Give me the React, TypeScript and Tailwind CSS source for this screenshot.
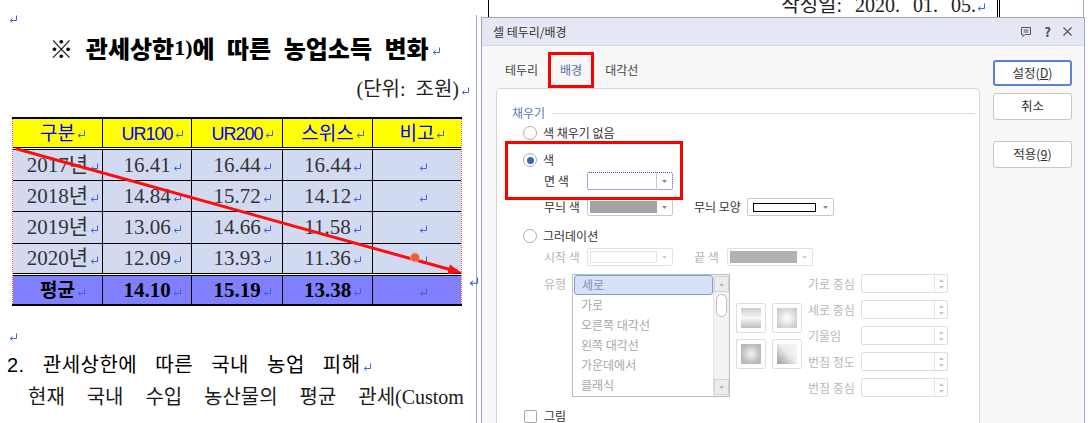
import type { ReactNode } from "react";

const KR = "font-['Noto_Sans_CJK_KR',sans-serif]";
const SERIF = "font-['Liberation_Serif','Noto_Sans_CJK_KR',serif]";
const SANS = "font-['Liberation_Sans','Noto_Sans_CJK_KR',sans-serif]";

function Mark({ className = "" }: { className?: string }) {
  return (
    <svg
      viewBox="0 0 8 8"
      className={`inline-block w-[8px] h-[8px] ${className}`}
      fill="none"
      stroke="#3f63d8"
      strokeWidth="1"
    >
      <path d="M7.5 0.5V5.5H1.5" />
      <path d="M3.5 3.5L1.2 5.5L3.5 7.5" />
    </svg>
  );
}

const COLS = [
  "w-[90px] border-r border-black",
  "w-[89px] border-r border-black",
  "w-[91px] border-r border-black",
  "w-[90px] border-r border-black",
  "w-[88px]",
];

function Row({ cells, className, cellClass = "" }: { cells: ReactNode[]; className: string; cellClass?: string }) {
  return (
    <div className={`flex ${className}`}>
      {cells.map((c, i) => (
        <div key={i} className={`${COLS[i]} h-full flex items-center justify-center ${cellClass}`}>
          <span className="whitespace-nowrap leading-none">
            {c}
            <Mark className="ml-[2px] -mr-[10px]" />
          </span>
        </div>
      ))}
    </div>
  );
}

const DATA = [
  { cells: ["2017년", "16.41", "16.44", "16.44", ""], h: "h-[31px] border-b border-black" },
  { cells: ["2018년", "14.84", "15.72", "14.12", ""], h: "h-[31px] border-b border-black" },
  { cells: ["2019년", "13.06", "14.66", "11.58", ""], h: "h-[32px] border-b border-black" },
  { cells: ["2020년", "12.09", "13.93", "11.36", ""], h: "h-[30px] border-b border-black" },
];

function Table() {
  return (
    <div className="w-[450px]">
      <div className="h-[2px] bg-black" />
      <div className="border-x border-dotted border-[#ff4a4a]">
        <Row
          className={`h-[29px] border-b border-black bg-[#ffff00] text-[#0000ff] ${SANS} text-[19px]`}
          cells={[
            "구분",
            <span key="a" className="text-[18px] tracking-[-1px]">UR100</span>,
            <span key="b" className="text-[18px] tracking-[-1px]">UR200</span>,
            "스위스",
            "비고",
          ]}
        />
        <div className="h-px bg-white" />
        <div className="h-px bg-black" />
        {DATA.map((r) => (
          <Row key={r.cells[0]} className={`${r.h} bg-[#d2daf2] ${SERIF} text-[21px] text-[#333]`} cells={r.cells} />
        ))}
        <div className="h-px bg-white" />
        <div className="h-px bg-black" />
        <Row
          className={`h-[28px] bg-[#8080ff] ${SERIF} text-[21px] font-bold text-black`}
          cells={[<span key="p" className="text-[19px]">평균</span>, "14.10", "15.19", "13.38", ""]}
        />
      </div>
      <div className="h-[2px] bg-black" />
    </div>
  );
}

function Doc() {
  const words = ["현재", "국내", "수입", "농산물의", "평균", "관세(Custom"];
  return (
    <div className="relative w-[476px] shrink-0 flex flex-col text-black">
      <div className="h-[27px] flex items-end pb-[4px] pl-[9px]">
        <Mark className="block" />
      </div>
      <div className="h-[42px] flex items-center justify-center pl-[2px]">
        <span className={`${KR} font-black text-[24px] leading-none whitespace-nowrap [word-spacing:7px]`}>
          ※ 관세상한
          <span className="font-['Liberation_Serif',serif] font-bold text-[22px] align-[3px]">1)</span>에 따른
          농업소득 변화
          <Mark className="ml-[3px] -mr-[11px]" />
        </span>
      </div>
      <div className="h-[40px] flex items-center justify-end pr-[7px]">
        <span className={`${SERIF} text-[20px] leading-none whitespace-nowrap text-[#222] [word-spacing:5px]`}>
          (단위: 조원)
          <Mark className="ml-[2px]" />
        </span>
      </div>
      <div className="mt-[8px] ml-[12px] flex">
        <Table />
        <div className="pt-[151px] ml-[7px]">
          <Mark className="block w-[9px] h-[9px]" />
        </div>
      </div>
      <div className="h-[20px]" />
      <div className="h-[22px] flex items-center pl-[9px]">
        <Mark className="block" />
      </div>
      <div className="h-[34px] flex items-center pl-[7px]">
        <span className={`${SANS} text-[20px] leading-none whitespace-nowrap tracking-[0.5px] [word-spacing:12px]`}>
          2. 관세상한에 따른 국내 농업 피해
          <Mark className="ml-[2px]" />
        </span>
      </div>
      <div className={`h-[30px] ml-[28px] w-[436px] flex items-center justify-between ${SERIF} text-[20px] leading-none text-[#1a1a1a]`}>
        {words.map((w) => (
          <span key={w} className="whitespace-nowrap">{w}</span>
        ))}
      </div>

      <svg className="absolute left-0 top-0 w-[476px] h-[423px] pointer-events-none" viewBox="0 0 476 423">
        <line x1="17" y1="149" x2="449" y2="269.3" stroke="#ff0d0d" strokeWidth="3" strokeLinecap="round" />
        <polygon points="462,273 447.2,274.3 449.9,264.4" fill="#ff0d0d" />
        <circle cx="415" cy="257.5" r="4.5" fill="#ef5b3c" stroke="#f7a58f" strokeWidth="1" />
      </svg>
    </div>
  );
}

function TopStrip() {
  return (
    <div className="h-[17px] shrink-0 flex overflow-hidden">
      <div className="ml-[11px] w-px bg-black" />
      <div className="w-[508px] flex justify-end items-start pr-[12px]">
        <span className={`-mt-[5px] ${SERIF} text-[20px] leading-[20px] whitespace-nowrap text-[#222] [word-spacing:8px]`}>
          작성일: 2020. 01. 05.
          <Mark className="ml-[1px]" />
        </span>
      </div>
      <div className="w-px bg-black" />
      <div className="ml-[1px] w-px bg-black" />
      <div className="ml-[83px] w-px bg-[#a3abcf]" />
    </div>
  );
}

function Radio({ on }: { on?: boolean }) {
  return (
    <span className="w-[14px] h-[14px] rounded-full border border-[#adadad] bg-white flex items-center justify-center shrink-0">
      {on && <span className="w-[7px] h-[7px] rounded-full bg-[#3f5fb8]" />}
    </span>
  );
}

function Arrow({ up, color }: { up?: boolean; color: string }) {
  return (
    <svg width="5" height="3" viewBox="0 0 5 3">
      <path d={up ? "M0 3h5L2.5 0z" : "M0 0h5L2.5 3z"} fill={color} />
    </svg>
  );
}

function Combo({
  width,
  children,
  focused,
  dim,
}: {
  width: string;
  children?: ReactNode;
  focused?: boolean;
  dim?: boolean;
}) {
  const border = focused
    ? "border border-dotted border-[#2f55c0]"
    : dim
      ? "border border-[#e2e2e2]"
      : "border border-[#c9c9c9]";
  return (
    <div className={`${width} h-[18px] ${border} bg-white flex items-center pl-[2px] rounded-[2px] shrink-0`}>
      <div className="flex-1 h-full py-[2px] flex items-center">{children}</div>
      <div className="w-[15px] h-full flex items-center justify-center">
        <Arrow color={dim ? "#d0d0d0" : "#8a8a8a"} />
      </div>
    </div>
  );
}

function Spin() {
  return (
    <div className="w-[87px] h-[19px] border border-[#dedede] bg-white rounded-[2px] flex">
      <div className="flex-1" />
      <div className="w-[13px] border-l border-[#e6e6e6] flex flex-col items-center justify-center gap-[4px]">
        <Arrow up color="#c6c6c6" />
        <Arrow color="#c6c6c6" />
      </div>
    </div>
  );
}

function ListBox() {
  const items = ["가로", "오른쪽 대각선", "왼쪽 대각선", "가운데에서", "클래식"];
  return (
    <div className="w-[158px] h-[123px] border border-[#bdbdbd] bg-white flex shrink-0">
      <div className="flex-1 flex flex-col">
        <div className="h-[20px] ml-[1px] flex items-center pl-[7px] border border-[#7f9ad6] bg-[#d7e0f6] rounded-[3px] text-[#8592b0]">
          세로
        </div>
        {items.map((t) => (
          <div key={t} className="h-[20px] flex items-center pl-[8px] text-[#a8a8a8]">
            {t}
          </div>
        ))}
      </div>
      <div className="w-[16px] bg-[#f3f3f3] border-l border-[#e4e4e4] flex flex-col items-center py-[1px]">
        <div className="w-[15px] h-[16px] border border-[#d2d2d2] bg-[#ececec] flex items-center justify-center">
          <Arrow up color="#b4b4b4" />
        </div>
        <div className="mt-[2px] w-[11px] h-[23px] rounded-full border border-[#bcbcbc] bg-white" />
        <div className="flex-1" />
        <div className="w-[15px] h-[16px] border border-[#d2d2d2] bg-[#ececec] flex items-center justify-center">
          <Arrow color="#b4b4b4" />
        </div>
      </div>
    </div>
  );
}

function Previews() {
  const fills = [
    "bg-[linear-gradient(180deg,#cdcdcd,#f8f8f8_50%,#bdbdbd)]",
    "bg-[radial-gradient(circle,#ffffff,#c2c2c2)]",
    "bg-[radial-gradient(closest-side,#f3f3f3,#b9b9b9)]",
    "bg-[linear-gradient(to_top_right,#9c9c9c,#ededed_55%,#f6f6f6)]",
  ];
  return (
    <div className="ml-[6px] mt-[29px] grid grid-cols-2 gap-[6px] self-start">
      {fills.map((f) => (
        <div key={f} className="w-[30px] h-[30px] border border-[#dedede] rounded-[2px] bg-white p-[4px]">
          <div className={`w-full h-full ${f}`} />
        </div>
      ))}
    </div>
  );
}

function Dialog() {
  const spins = ["가로 중심", "세로 중심", "기울임", "번짐 정도", "번짐 중심"];
  return (
    <div className={`ml-[4px] w-[604px] h-[420px] shrink-0 border border-[#9aa6cc] bg-[#f8f8f8] flex flex-col ${KR} text-[12px] leading-none text-[#333]`}>
      <div className="h-[28px] shrink-0 bg-[#e4e8f4] border-b border-[#d3d9ea] flex items-center pl-[11px] pr-[12px]">
        <span className="flex-1">셀 테두리/배경</span>
        <svg width="12" height="12" viewBox="0 0 12 12" fill="none" stroke="#555" strokeWidth="1">
          <path d="M1.5 1.5h9v7h-5.5l-2 2v-2h-1.5z" />
          <path d="M3.5 4h5M3.5 6h5" />
        </svg>
        <span className="ml-[12px] font-bold text-[13px] text-[#4a4a4a]">?</span>
        <svg className="ml-[12px]" width="9" height="9" viewBox="0 0 9 9" stroke="#555" strokeWidth="1.2">
          <path d="M0.5 0.5L8.5 8.5M8.5 0.5L0.5 8.5" />
        </svg>
      </div>
      <div className="flex flex-1">
        <div className="w-[498px] pl-[14px] flex flex-col">
          <div className="h-[42px] shrink-0 flex items-end pl-[9px] text-[12px] text-[#444]">
            <div className="h-[36px] flex items-center">테두리</div>
            <div className="ml-[10px] w-[46px] h-[36px] border-[3px] border-[#ff0000] flex items-center justify-center text-[#5068a8]">
              배경
            </div>
            <div className="ml-[11px] h-[36px] flex items-center">대각선</div>
          </div>
          <div className="relative w-[484px] flex-1 bg-white border border-[#d6d6d6] rounded-[4px] flex flex-col">
            <div className="mt-[14px] h-[20px] flex items-center pl-[15px] pr-[4px]">
              <span className="text-[#5a76bb]">채우기</span>
              <div className="ml-[7px] flex-1 h-px bg-[#dadada]" />
            </div>
            <div className="mt-[1px] h-[18px] flex items-center pl-[26px]">
              <Radio />
              <span className="ml-[6px]">색 채우기 없음</span>
            </div>
            <div className="mt-[9px] h-[18px] flex items-center pl-[26px]">
              <Radio on />
              <span className="ml-[6px]">색</span>
            </div>
            <div className="mt-[3px] h-[18px] flex items-center pl-[47px]">
              <span className="w-[43px]">면 색</span>
              <Combo width="w-[86px]" focused>
                <div className="w-full h-[18px] -my-[2px] border-r border-[#c8c8c8]" />
              </Combo>
            </div>
            <div className="mt-[8px] h-[18px] flex items-center pl-[47px]">
              <span className="w-[43px]">무늬 색</span>
              <Combo width="w-[86px]">
                <div className="w-full h-full bg-[#a3a3a3]" />
              </Combo>
              <span className="ml-[21px] w-[53px]">무늬 모양</span>
              <Combo width="w-[87px]">
                <div className="ml-[3px] w-[63px] h-[9px] border border-black bg-white" />
              </Combo>
            </div>
            <div className="mt-[11px] h-[18px] flex items-center pl-[26px]">
              <Radio />
              <span className="ml-[6px]">그러데이션</span>
            </div>
            <div className="mt-[3px] h-[18px] flex items-center pl-[47px] text-[#b5b5b5]">
              <span className="w-[43px]">시작 색</span>
              <Combo width="w-[86px]" dim>
                <div className="w-full h-full border border-[#e4e4e4]" />
              </Combo>
              <span className="ml-[21px] w-[33px]">끝 색</span>
              <Combo width="w-[86px]" dim>
                <div className="w-full h-full bg-[#b2b2b2]" />
              </Combo>
            </div>
            <div className="mt-[8px] h-[123px] flex pl-[47px]">
              <span className="w-[28px] pt-[4px] text-[#b5b5b5]">유형</span>
              <ListBox />
              <Previews />
              <div className="ml-[6px] flex flex-col gap-[7px]">
                {spins.map((s) => (
                  <div key={s} className="h-[19px] flex items-center">
                    <span className="w-[53px] text-[#b8b8b8] whitespace-nowrap">{s}</span>
                    <Spin />
                  </div>
                ))}
              </div>
            </div>
            <div className="mt-[10px] h-[18px] flex items-center pl-[27px]">
              <span className="w-[13px] h-[13px] border border-[#a6a6a6] rounded-[2px] bg-white" />
              <span className="ml-[7px]">그림</span>
            </div>
            <div className="absolute left-[8px] top-[52px] w-[178px] h-[59px] border-[3px] border-[#ff0000] pointer-events-none" />
          </div>
        </div>
        <div className="ml-[13px] pt-[14px] w-[79px] flex flex-col text-[12.5px]">
          <button className="h-[26px] border-2 border-[#5a80d8] rounded-[3px] bg-white flex items-center justify-center">
            설정(<span className="underline">D</span>)
          </button>
          <button className="mt-[7px] h-[27px] border border-[#c8c8c8] rounded-[3px] bg-white flex items-center justify-center">
            취소
          </button>
          <button className="mt-[21px] h-[27px] border border-[#c8c8c8] rounded-[3px] bg-white flex items-center justify-center">
            적용(<span className="underline">9</span>)
          </button>
        </div>
      </div>
    </div>
  );
}

export default function App() {
  return (
    <div className="relative w-[1088px] h-[423px] overflow-hidden bg-white flex">
      <Doc />
      <div className="w-px mt-[15px] bg-[#a3abcf]" />
      <div className="flex-1 flex flex-col min-w-0">
        <TopStrip />
        <Dialog />
      </div>
    </div>
  );
}
